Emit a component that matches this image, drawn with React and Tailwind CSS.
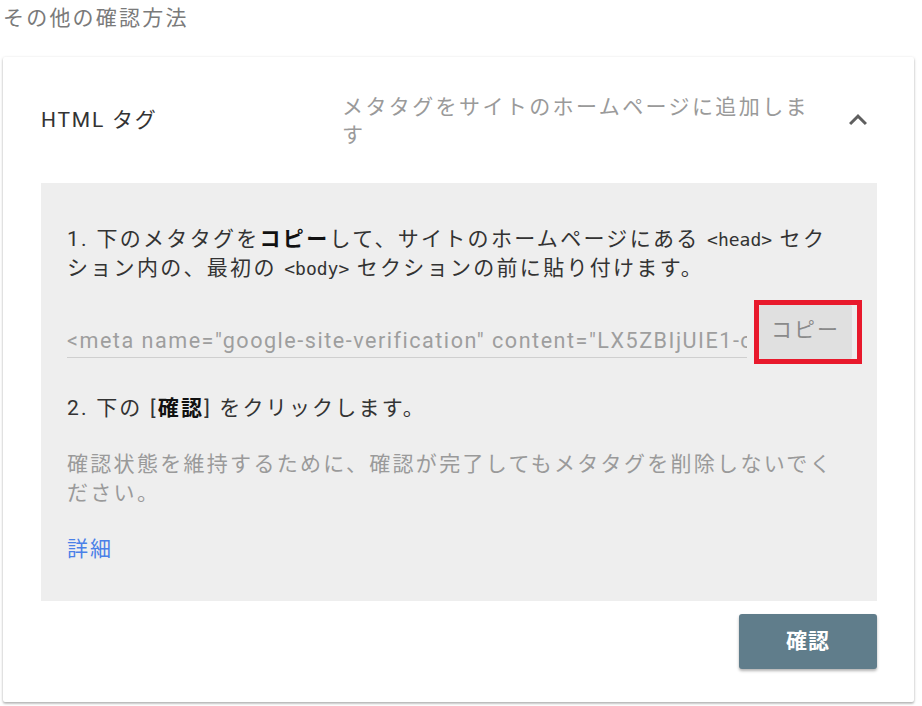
import React from "react";

export default function App() {
  const font = { fontFamily: 'Roboto, "Noto Sans CJK JP", sans-serif' };
  const mono = { fontFamily: '"DejaVu Sans Mono", monospace' };
  return (
    <div
      className="w-[922px] h-[706px] bg-white overflow-hidden relative"
      style={font}
    >
      <div className="pl-[3px] h-[40px] text-[21px] leading-[36px] tracking-[2.2px] text-[#7a7a7a]">
        その他の確認方法
      </div>
      <div className="ml-[3px] mt-[17px] w-[911px] h-[645px] bg-white rounded-[2px] shadow-[0_1px_3px_rgba(0,0,0,0.25),0_2px_2px_rgba(0,0,0,0.12)] flex flex-col">
        <div className="h-[126px] flex items-center pl-[38px] pr-[40px]">
          <div className="w-[301px] text-[21px] text-[#333] pt-[1px] tracking-[1.8px]">HTML タグ</div>
          <div className="w-[482px] text-[21px] leading-[28px] tracking-[2.4px] text-[#9a9a9a] pt-[1px]">
            メタタグをサイトのホームページに追加します
          </div>
          <div className="flex-1 flex justify-end -mr-[2px]">
            <svg width="36" height="36" viewBox="0 0 24 24">
              <path d="M7.41 15.41 12 10.83l4.59 4.58L18 14l-6-6-6 6z" fill="#5f5f5f" />
            </svg>
          </div>
        </div>
        <div className="mx-[38px] w-[836px] h-[418px] bg-[#eeeeee] pl-[26px] pr-[32px] pt-[42px]">
          <div className="text-[21px] leading-[29px] tracking-[2.3px] text-[#333]">
            1. 下のメタタグを<b className="font-bold text-[#111]">コピー</b>して、サイトのホームページにある{" "}
            <span className="text-[18px] tracking-[0px]" style={mono}>&lt;head&gt;</span>{" "}
            セクション内の、最初の{" "}
            <span className="text-[18px] tracking-[0px]" style={mono}>&lt;body&gt;</span>{" "}
            セクションの前に貼り付けます。
          </div>
          <div className="flex items-start mt-[17px] h-[64px]">
            <div className="w-[680px] shrink-0 h-[58px] pt-[26px] border-b border-[#cfcfcf] overflow-hidden whitespace-nowrap text-[21.6px] leading-[29px] tracking-[1.5px] text-[#9e9e9e]">
              &lt;meta name="google-site-verification" content="LX5ZBIjUIE1-cDvGxYkq7s9F" /&gt;
            </div>
            <div className="ml-[7px] shrink-0 w-[108px] h-[64px] border-[5px] border-[#e8192c] flex">
              <div className="flex-1 mr-[5px] bg-[#e0e0e0] rounded-[2px] flex items-center justify-center text-[21px] text-[#8a8a8a] tracking-[2px] pb-[2px]">
                コピー
              </div>
            </div>
          </div>
          <div className="mt-[30px] text-[21px] leading-[29px] tracking-[2.2px] text-[#333]">
            2. 下の [<b className="font-bold text-[#111]">確認</b>] をクリックします。
          </div>
          <div className="mt-[27px] text-[21px] leading-[29px] tracking-[2.3px] text-[#9a9a9a]">
            確認状態を維持するために、確認が完了してもメタタグを削除しないでください。
          </div>
          <div className="mt-[27px] text-[21px] leading-[29px] tracking-[2px] text-[#4a80e8]">詳細</div>
        </div>
        <div className="flex justify-end mr-[37px] mt-[13px]">
          <div className="w-[138px] h-[55px] bg-[#607d8b] rounded-[3px] shadow-[0_2px_3px_rgba(0,0,0,0.3)] flex items-center justify-center text-white text-[21px] font-bold tracking-[1px]">
            確認
          </div>
        </div>
      </div>
    </div>
  );
}
